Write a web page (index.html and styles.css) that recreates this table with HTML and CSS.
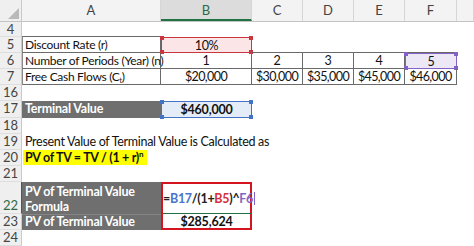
FILE: index.html
```html
<!DOCTYPE html>
<html lang="en">
<head>
    <meta charset="UTF-8">
    <meta name="viewport" content="width=device-width, initial-scale=1.0">
    <title>Terminal Value</title>
    <link rel="stylesheet" href="styles.css">
</head>
<body>
    <div class="sheet">
        <!-- column letters -->
        <div class="row head">
            <div class="cell hd corner">
                <svg width="11" height="11" viewBox="0 0 11 11"><polygon points="11,0 11,11 0,11" fill="#b9b9b9"/></svg>
            </div>
            <div class="cell a col">A</div>
            <div class="cell b col active">B</div>
            <div class="cell c col">C</div>
            <div class="cell d col">D</div>
            <div class="cell e col">E</div>
            <div class="cell f col">F</div>
            <div class="cell g col"></div>
        </div>

        <div class="row r4">
            <div class="cell hd">4</div>
            <div class="cell a bb"></div>
            <div class="cell g"></div>
        </div>

        <div class="row">
            <div class="cell hd">5</div>
            <div class="cell a bl bb br">Discount Rate (r)</div>
            <div class="cell b ref red">10%<i class="knob tl"></i><i class="knob tr"></i><i class="knob bl2"></i><i class="knob br2"></i></div>
            <div class="cell c bb"></div>
            <div class="cell d bb"></div>
            <div class="cell e bb"></div>
            <div class="cell f bb"></div>
            <div class="cell g"></div>
        </div>

        <div class="row">
            <div class="cell hd">6</div>
            <div class="cell a bl bb br">Number of Periods (Year) (n)</div>
            <div class="cell b bb br">1</div>
            <div class="cell c bb br">2</div>
            <div class="cell d bb br">3</div>
            <div class="cell e bb br">4</div>
            <div class="cell f ref purple">5<i class="knob tl"></i><i class="knob tr"></i><i class="knob bl2"></i><i class="knob br2"></i></div>
            <div class="cell g"></div>
        </div>

        <div class="row">
            <div class="cell hd">7</div>
            <div class="cell a bl bb br">Free Cash Flows (C<sub>t</sub>)</div>
            <div class="cell b bb br num">$20,000</div>
            <div class="cell c bb br num">$30,000</div>
            <div class="cell d bb br num">$35,000</div>
            <div class="cell e bb br num">$45,000</div>
            <div class="cell f bb br num">$46,000</div>
            <div class="cell g"></div>
        </div>

        <div class="row">
            <div class="cell hd">16</div>
            <div class="cell g"></div>
        </div>

        <div class="row r17">
            <div class="cell hd">17</div>
            <div class="cell a dark">Terminal Value</div>
            <div class="cell b ref blue strong">$460,000<i class="knob tl"></i><i class="knob tr"></i><i class="knob bl2"></i><i class="knob br2"></i></div>
            <div class="cell g"></div>
        </div>

        <div class="row">
            <div class="cell hd">18</div>
            <div class="cell g"></div>
        </div>

        <div class="row">
            <div class="cell hd">19</div>
            <div class="cell a">Present Value of Terminal Value is Calculated as</div>
            <div class="cell g"></div>
        </div>

        <div class="row">
            <div class="cell hd">20</div>
            <div class="cell a"><span class="mark">PV of TV = TV / (1 + r)<sup>n</sup></span></div>
            <div class="cell g"></div>
        </div>

        <div class="row">
            <div class="cell hd">21</div>
            <div class="cell g"></div>
        </div>

        <div class="row r22">
            <div class="cell hd current">22</div>
            <div class="cell a dark two">PV of Terminal Value<br>Formula</div>
            <div class="cell b edit top"><span class="formula">=<span class="ref-b">B17</span>/(1+<span class="ref-r">B5</span>)^<span class="ref-p">F6</span><span class="caret"></span></span><span class="active-line"></span></div>
            <div class="cell g"></div>
        </div>

        <div class="row">
            <div class="cell hd">23</div>
            <div class="cell a dark split">PV of Terminal Value</div>
            <div class="cell b edit bottom strong">$285,624</div>
            <div class="cell g"></div>
        </div>

        <div class="row">
            <div class="cell hd">24</div>
            <div class="cell g"></div>
        </div>
    </div>
</body>
</html>
```

FILE: styles.css
```css
body {
    margin: 0;
    background: #fff;
    font-family: Lato, "Liberation Sans", sans-serif;
    font-size: 12.5px;
    letter-spacing: -0.3px;
    color: #111;
}
.sheet {
    width: 474px;
    height: 246px;
    overflow: hidden;
}
.row {
    display: flex;
    height: 16px;
}
.r4 { height: 15px; }
.r17 { height: 17px; }
.r22 { height: 32px; }

.cell {
    flex: none;
    box-sizing: border-box;
    height: 100%;
    line-height: 16px;
    white-space: nowrap;
    position: relative;
}
.hd {
    width: 22px;
    background: #efefef;
    border-right: 1px solid #c9c9c9;
    border-bottom: 1px solid #dedede;
    color: #444;
    font-size: 13px;
    letter-spacing: 0;
    text-align: center;
    line-height: 15px;
}
.a { width: 139px; padding-left: 3px; }
.b { width: 91px; text-align: center; }
.c, .d, .e { width: 51px; text-align: center; }
.f { width: 52px; text-align: center; }
.g { flex: 1; }
.num { letter-spacing: -0.6px; }

/* column header strip */
.head {
    height: 22px;
    background: #f3f3f3;
    border-bottom: 1px solid #c4c4c4;
    box-sizing: border-box;
}
.head .cell { line-height: 21px; font-size: 13px; letter-spacing: 0; }
.col {
    color: #444;
    text-align: center;
    padding-left: 0;
    border-right: 1px solid #d6d6d6;
}
.col.active {
    background: #dcdcdc;
    color: #2d6b45;
    border-bottom: 2px solid #217346;
}
.corner {
    display: flex;
    align-items: flex-end;
    justify-content: flex-end;
    padding: 0 2px 2px 0;
    border-bottom: none;
}

/* cell borders */
.bb { border-bottom: 1px solid #6a6a6a; }
.br { border-right: 1px solid #6a6a6a; }
.bl {
    border-left: 1px solid #8a8a8a;
    padding-left: 2px;
    font-size: 12px;
    letter-spacing: -0.3px;
}

.strong { font-weight: bold; letter-spacing: -0.2px; }

/* grey label cells */
.dark {
    background: #6f6f6f;
    color: #fff;
    font-weight: bold;
    letter-spacing: -0.2px;
}
.dark.two {
    line-height: 15px;
    padding-top: 2px;
}
.dark.split { border-top: 1px solid #858585; line-height: 14px; }

.mark {
    display: inline-block;
    background: #ffff00;
    font-weight: bold;
    line-height: 15px;
    padding-right: 4px;
    margin-left: -2px;
    padding-left: 2px;
}
.mark sup {
    font-size: 8px;
    line-height: 0;
    vertical-align: 5px;
}
sub {
    font-size: 7px;
    line-height: 0;
    vertical-align: -2px;
}

/* formula reference boxes */
.ref { border: 1px solid; }
.ref.red { border-color: #c9363f; background: #fbe5e6; }
.ref.blue { border-color: #4472c4; background: #e4ecf7; line-height: 15px; }
.ref.purple { border-color: #8462c4; background: #ede8f6; }
.knob {
    position: absolute;
    width: 4px;
    height: 4px;
}
.ref.red .knob { background: #c9363f; }
.ref.blue .knob { background: #4472c4; }
.ref.purple .knob { background: #8462c4; }
.knob.tl { top: -2px; left: -2px; }
.knob.tr { top: -2px; right: -2px; }
.knob.bl2 { bottom: -2px; left: -2px; }
.knob.br2 { bottom: -2px; right: -2px; }

/* cell being edited */
.edit {
    border-left: 2px solid #d4141f;
    border-right: 2px solid #d4141f;
}
.edit.top {
    border-top: 2px solid #d4141f;
    text-align: left;
    line-height: 30px;
}
.edit.bottom {
    border-bottom: 2px solid #d4141f;
    line-height: 15px;
}
.formula {
    font-weight: bold;
    color: #222;
}
.ref-b { color: #4a74c9; }
.ref-r { color: #d3313c; }
.ref-p { color: #8462c4; }
.caret {
    display: inline-block;
    width: 1px;
    height: 13px;
    background: #8462c4;
    vertical-align: -2px;
    margin-left: 1px;
}
.active-line {
    position: absolute;
    left: 0;
    right: -2px;
    bottom: 0;
    height: 1px;
    background: #217346;
}
.current {
    color: #2d6b45;
    display: flex;
    align-items: flex-end;
    justify-content: center;
    border-right: 1px solid #217346;
}
```
